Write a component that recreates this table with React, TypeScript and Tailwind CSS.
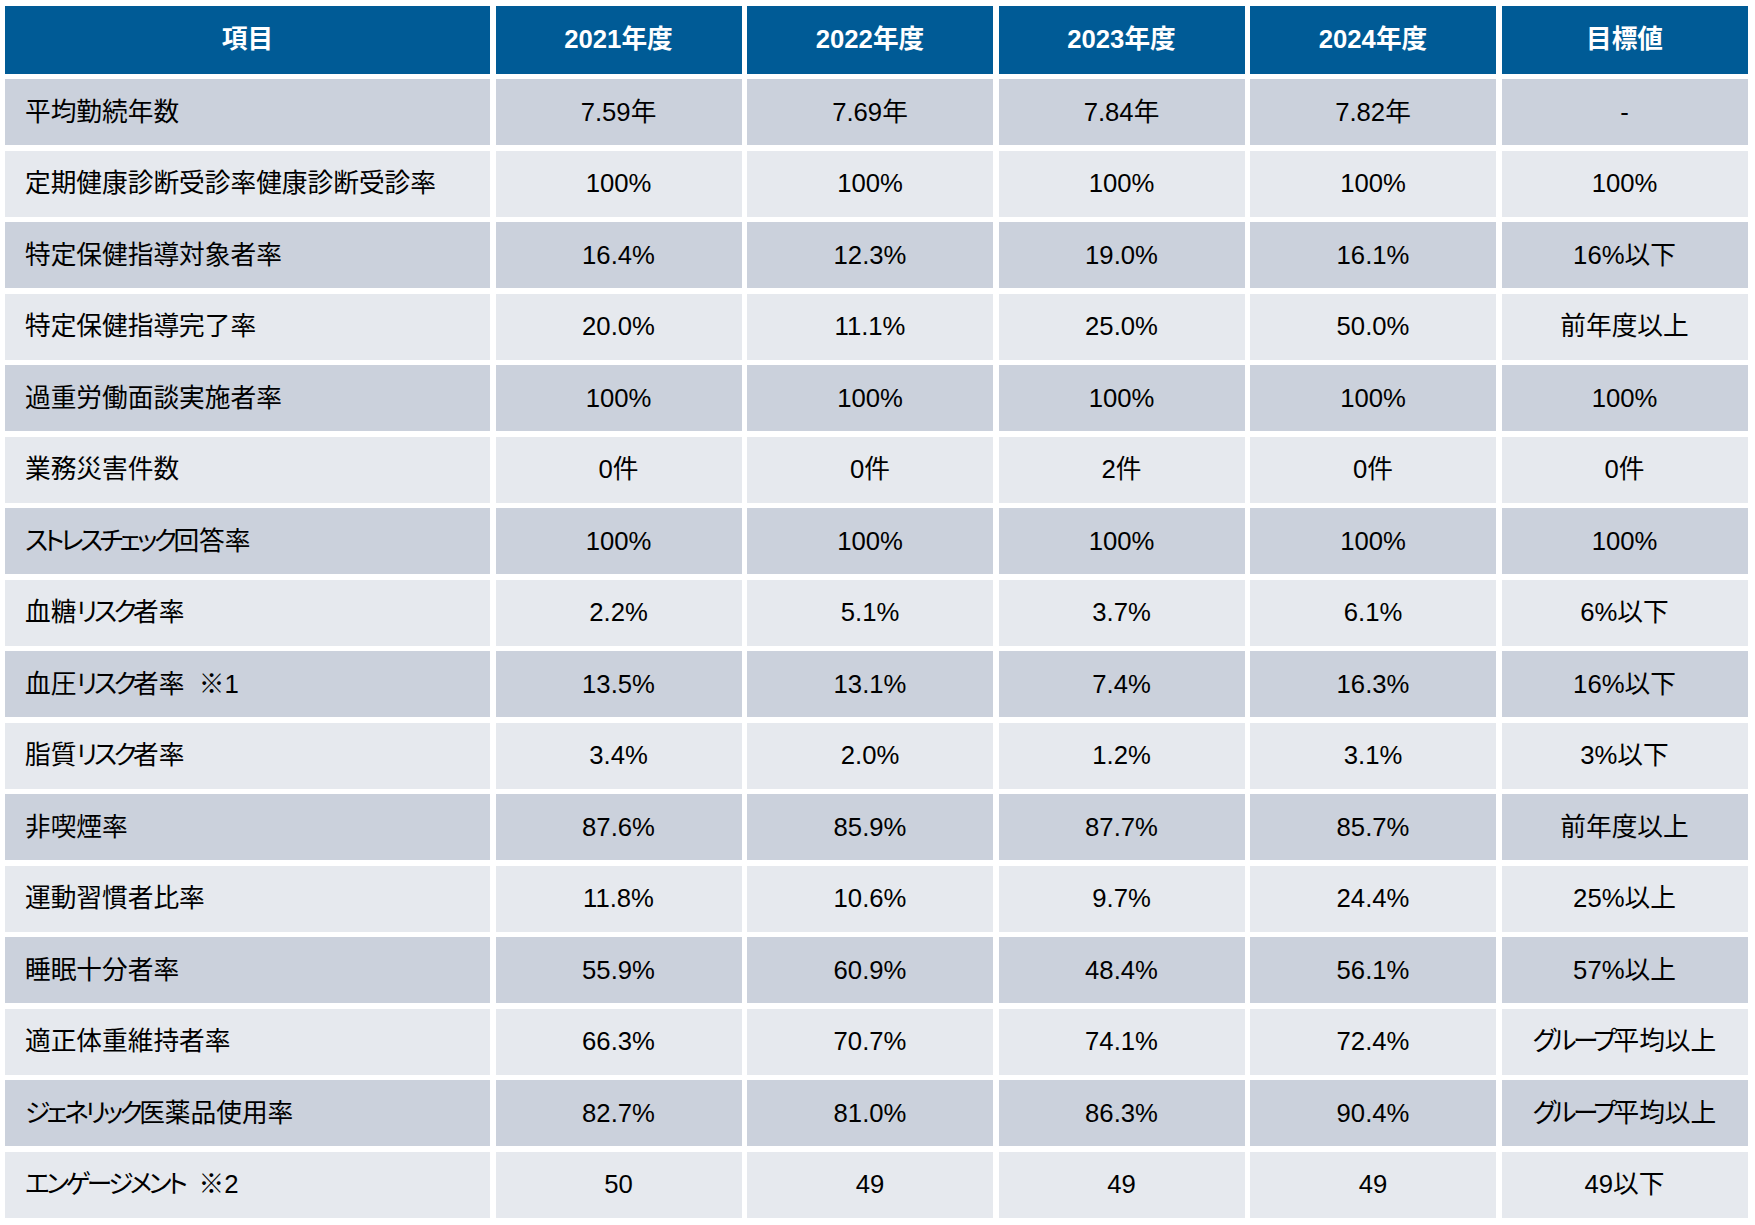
const columns = ["項目", "2021年度", "2022年度", "2023年度", "2024年度", "目標値"];

const rows: string[][] = [
  ["平均勤続年数", "7.59年", "7.69年", "7.84年", "7.82年", "-"],
  ["定期健康診断受診率健康診断受診率", "100%", "100%", "100%", "100%", "100%"],
  ["特定保健指導対象者率", "16.4%", "12.3%", "19.0%", "16.1%", "16%以下"],
  ["特定保健指導完了率", "20.0%", "11.1%", "25.0%", "50.0%", "前年度以上"],
  ["過重労働面談実施者率", "100%", "100%", "100%", "100%", "100%"],
  ["業務災害件数", "0件", "0件", "2件", "0件", "0件"],
  ["ストレスチェック回答率", "100%", "100%", "100%", "100%", "100%"],
  ["血糖リスク者率", "2.2%", "5.1%", "3.7%", "6.1%", "6%以下"],
  ["血圧リスク者率  ※1", "13.5%", "13.1%", "7.4%", "16.3%", "16%以下"],
  ["脂質リスク者率", "3.4%", "2.0%", "1.2%", "3.1%", "3%以下"],
  ["非喫煙率", "87.6%", "85.9%", "87.7%", "85.7%", "前年度以上"],
  ["運動習慣者比率", "11.8%", "10.6%", "9.7%", "24.4%", "25%以上"],
  ["睡眠十分者率", "55.9%", "60.9%", "48.4%", "56.1%", "57%以上"],
  ["適正体重維持者率", "66.3%", "70.7%", "74.1%", "72.4%", "グループ平均以上"],
  ["ジェネリック医薬品使用率", "82.7%", "81.0%", "86.3%", "90.4%", "グループ平均以上"],
  ["エンゲージメント  ※2", "50", "49", "49", "49", "49以下"],
];

// katakana in the source font is set narrower than the kanji
function Label({ text }: { text: string }) {
  const parts = text.split(/([\u30A0-\u30FF]+)/);
  return (
    <>
      {parts.map((p, k) =>
        /^[\u30A0-\u30FF]+$/.test(p) ? (
          <span key={k} className="inline-block [letter-spacing:-3.5px] [font-feature-settings:'palt']">
            {p}
          </span>
        ) : (
          <span key={k}>{p}</span>
        )
      )}
    </>
  );
}

export default function App() {
  return (
    <div
      className="w-[1755px] h-[1225px] bg-white pl-[5px] pt-[6px] text-[25.7px] text-black"
      style={{ fontFamily: '"Liberation Sans", "Noto Sans CJK JP", sans-serif' }}
    >
      <div className="grid grid-cols-[485px_repeat(5,246px)] gap-x-[5.5px] gap-y-[5.5px]">
        {/* Header */}
        {columns.map((c) => (
          <div
            key={c}
            className="h-[67.5px] bg-[#005b96] text-white font-bold flex items-center justify-center pb-[1px]"
          >
            {c}
          </div>
        ))}

        {/* Body */}
        {rows.map((row, i) => {
          const bg = i % 2 === 0 ? "bg-[#cbd1dc]" : "bg-[#e6e9ee]";
          return row.map((cell, j) => (
            <div
              key={`${i}-${j}`}
              className={`h-[66px] ${bg} flex items-center whitespace-pre ${
                j === 0 ? "pl-[20px]" : "justify-center"
              }`}
            >
              <Label text={cell} />
            </div>
          ));
        })}
      </div>
    </div>
  );
}
